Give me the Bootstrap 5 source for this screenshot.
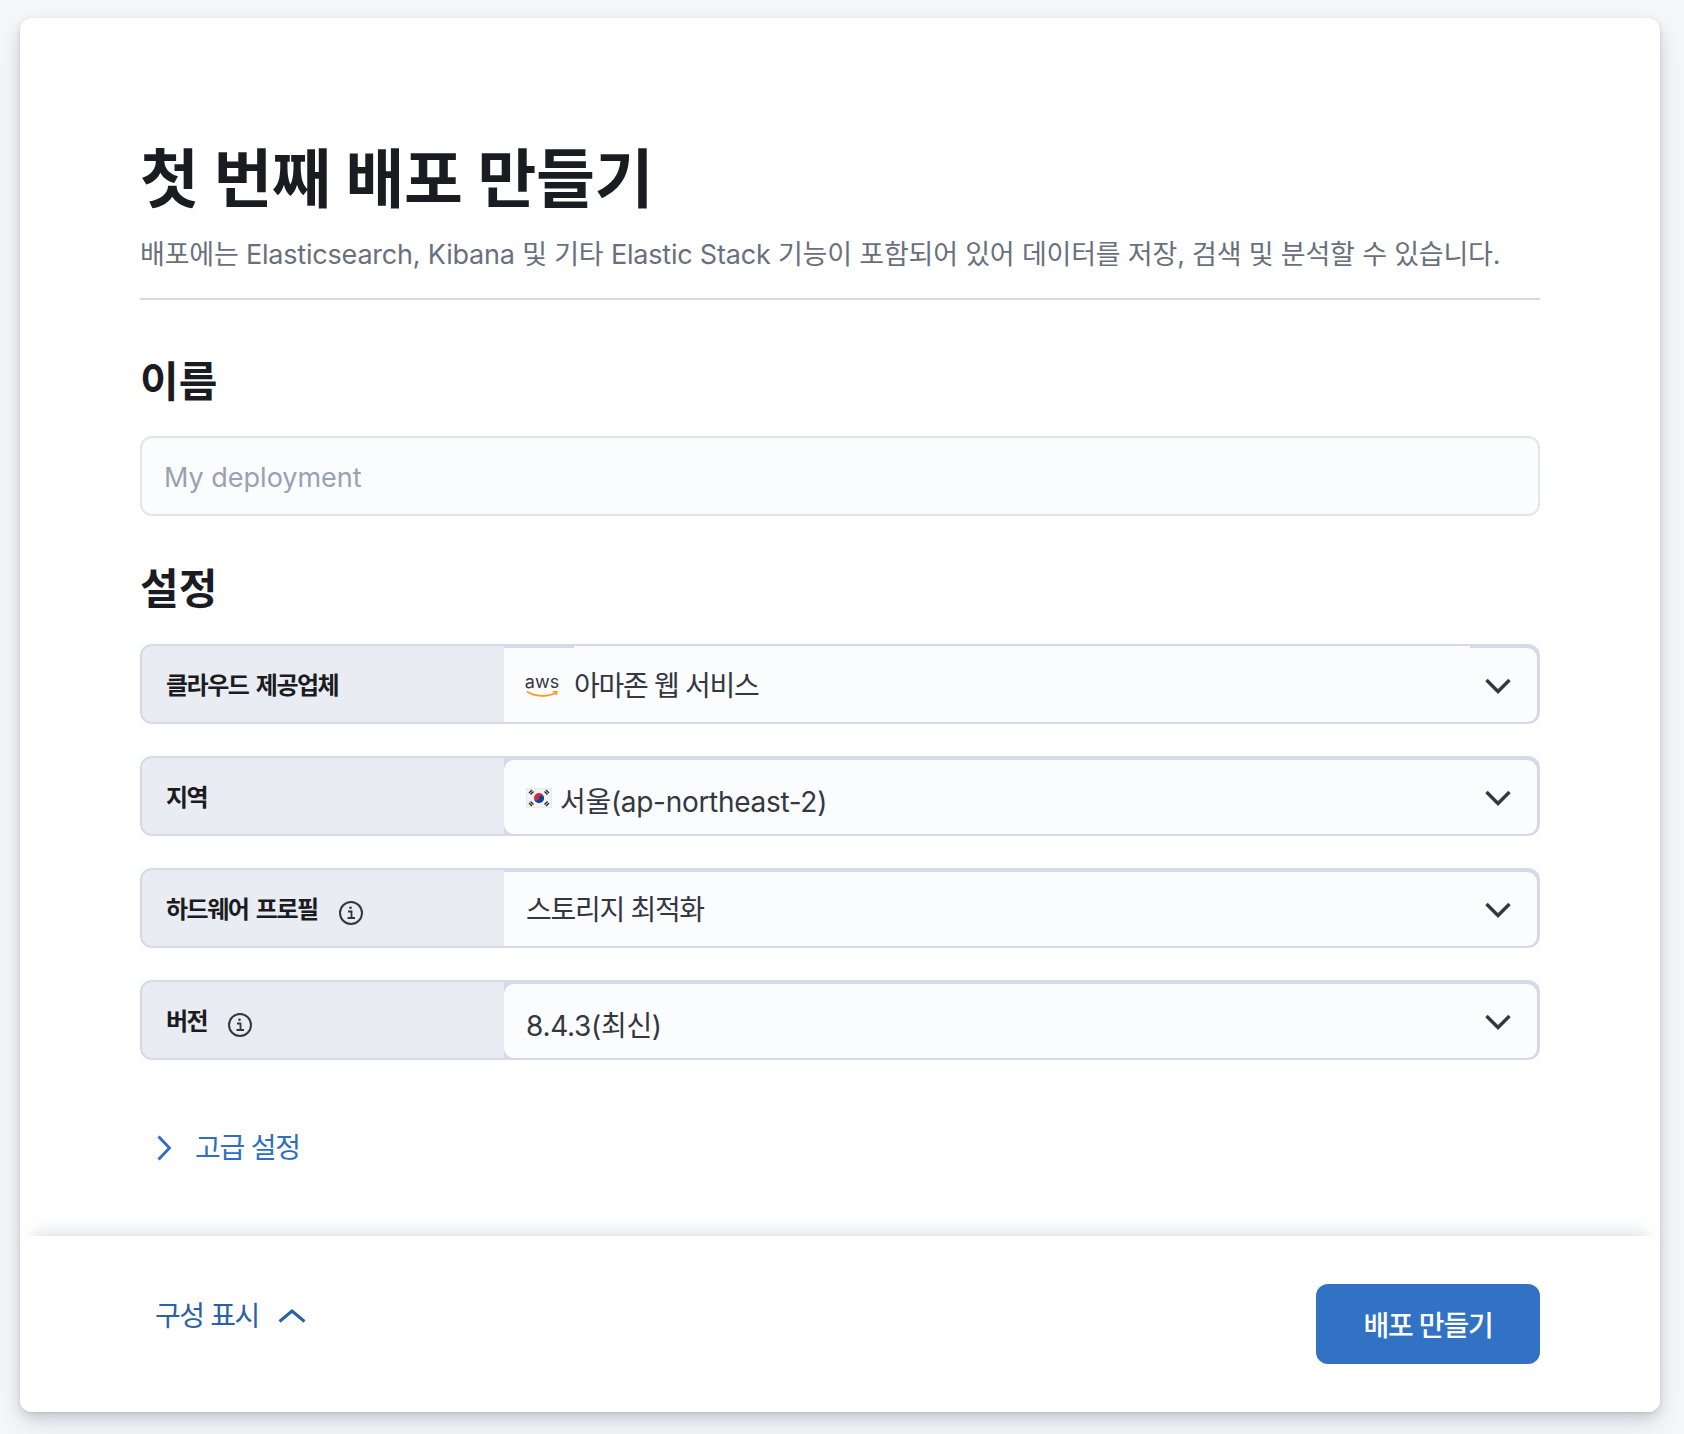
<!DOCTYPE html>
<html lang="ko">
<head>
    <meta charset="UTF-8">
    <meta name="viewport" content="width=device-width, initial-scale=1.0">
    <title>첫 번째 배포 만들기</title>

    <link rel="stylesheet" href="https://cdn.jsdelivr.net/npm/bootstrap@5.3.0/dist/css/bootstrap.min.css">
    <style>
        body {
            min-height: 100vh;
            padding: 18px 24px 22px 20px;
            background: #f5f7fa;
            font-family: Inter, "Noto Sans CJK KR", sans-serif;
            color: #343741;
        }
        .deploy-card {
            height: 1394px;
            border: 0;
            border-radius: 12px;
            box-shadow: 0 1px 3px rgba(30,35,60,.1), 0 5px 12px rgba(30,35,60,.13), 0 12px 28px rgba(60,66,90,.13);
        }
        .deploy-main { padding: 121px 120px 0; height: 1218px; }
        .deploy-title { font-size: 64px; line-height: 80px; font-weight: 700; color: #1a1c21; letter-spacing: -.3px; margin: 0; }
        .deploy-sub { font-size: 27px; line-height: 40px; letter-spacing: -.2px; color: #69707d; margin: 16px 0 0; }
        .deploy-rule { height: 2px; background: #d3dae6; margin-top: 23px; }
        .section-head { font-size: 42px; line-height: 56px; font-weight: 700; color: #1a1c21; margin: 0; }
        .name-head { margin-top: 54px; }
        .settings-head { margin-top: 45px; }
        .name-input, .name-input:focus {
            height: 80px;
            margin-top: 26px;
            padding: 2px 22px 0;
            font-size: 27px;
            background: #fbfcfd;
            border: 2px solid #e3e6ec;
            border-radius: 12px;
            box-shadow: none;
        }
        .name-input::placeholder { color: #98a2b3; opacity: 1; }
        .settings-rows { margin-top: 27px; row-gap: 32px; }
        .setting-row {
            height: 80px;
            background: #d5d9e8;
            border-radius: 12px;
            padding: 4px 3px 2px 2px;
        }
        .setting-label {
            width: 362px;
            margin-top: -2px;
            padding: 4px 0 0 24px;
            background: #e9ecf2;
            border-radius: 10px 0 0 10px;
            font-size: 24px;
            letter-spacing: -1.5px;
            word-spacing: 3px;
            font-weight: 600;
            color: #1a1c21;
        }
        .setting-value {
            background: #fbfcfd;
            padding: 2px 26px 0 22px;
            font-size: 28px;
            letter-spacing: -1.3px;
            color: #343741;
            border-radius: 10px;
        }
        .setting-value.square-left { border-radius: 0 10px 10px 0; }
        .setting-value.latin-value { letter-spacing: -.3px; }
        .first-row { position: relative; }
        .first-row::before {
            content: "";
            position: absolute;
            left: 434px;
            top: 2px;
            width: 896px;
            height: 2px;
            background: #fbfcfd;
        }
        .low-text { padding-top: 8px; }
        .chevron-box { width: 26px; height: 16px; flex: none; }
        .info-mark { width: 24px; height: 24px; margin-left: 21px; margin-top: 6px; flex: none; }
        .advanced-link {
            margin-top: 68px;
            height: 40px;
            padding-left: 17px;
            color: #2f6fbf;
            font-size: 28px;
            letter-spacing: -1.2px;
            text-decoration: none;
        }
        .deploy-foot {
            position: relative;
            height: 176px;
            padding: 48px 120px 0 135px;
            background: #fff;
            border-radius: 0 0 12px 12px;
            box-shadow: 0 -17px 16px -14px rgba(90,100,135,.22);
        }
        .config-link {
            height: 40px;
            margin-top: 12px;
            color: #2a62a8;
            font-size: 28px;
            letter-spacing: -1.4px;
            text-decoration: none;
        }
        .config-chevron { margin-left: 19px; }
        .create-btn {
            width: 224px;
            height: 80px;
            padding-top: 10px;
            background: #3272c4;
            border: 0;
            border-radius: 12px;
            font-size: 28px;
            letter-spacing: -1.200px;
            font-weight: 500;
            color: #fff;
        }
        .aws-box { width: 32px; margin-right: 16px; }
        .aws-word { font-size: 18px; line-height: 16px; letter-spacing: 0; color: #343741; }
    </style>
</head>
<body>

    <div class="card deploy-card">
        <div class="deploy-main">
            <h1 class="deploy-title">첫 번째 배포 만들기</h1>
            <p class="deploy-sub">배포에는 Elasticsearch, Kibana 및 기타 Elastic Stack 기능이 포함되어 있어 데이터를 저장, 검색 및 분석할 수 있습니다.</p>
            <div class="deploy-rule"></div>

            <h2 class="section-head name-head">이름</h2>
            <input type="text" class="form-control name-input" placeholder="My deployment">

            <h2 class="section-head settings-head">설정</h2>
            <div class="settings-rows d-flex flex-column">
                <div class="setting-row first-row d-flex">
                    <div class="setting-label d-flex align-items-center">클라우드 제공업체</div>
                    <div class="setting-value square-left flex-grow-1 d-flex align-items-center justify-content-between">
                        <span class="d-flex align-items-center">
                            <span class="aws-box d-flex flex-column align-items-center">
                                <span class="aws-word">aws</span>
                                <svg width="32" height="8" viewBox="0 0 33 8" fill="none"><path d="M1 1.500C9 7 23 7.500 31 2.500" stroke="#f79c1e" stroke-width="1.800"/><path d="M27.500 1.500L32 1.500L31 5" stroke="#f79c1e" stroke-width="1.400"/></svg>
                            </span>
                            아마존 웹 서비스
                        </span>
                        <svg class="chevron-box" viewBox="0 0 26 16" fill="none"><path d="M1.500 2L13 13.500L24.500 2" stroke="#343741" stroke-width="3.400"/></svg>
                    </div>
                </div>
                <div class="setting-row d-flex">
                    <div class="setting-label d-flex align-items-center">지역</div>
                    <div class="setting-value latin-value flex-grow-1 d-flex align-items-center justify-content-between">
                        <span class="d-flex align-items-center low-text">
                            <svg width="26" height="20" viewBox="0 0 26 20" class="me-2" style="margin-top:-8px">
                                <rect width="26" height="20" rx="1" fill="#f2f2f2" stroke="#d4d4d4" stroke-width=".6"/>
                                <circle cx="13" cy="10" r="5" fill="#cd2e3a"/>
                                <path d="M8 10a5 5 0 0 0 10 0a2.500 2.500 0 0 0-5 0a2.500 2.500 0 0 1-5 0z" fill="#0047a0"/>
                                <path d="M3 5l3-3M4.500 6.500l3-3M18.500 3.500l3 3M20 2l3 3M3 15l3 3M4.500 13.500l3 3M18.500 16.500l3-3M20 18l3-3" stroke="#222" stroke-width="1.300"/>
                            </svg>
                            서울(ap-northeast-2)
                        </span>
                        <svg class="chevron-box" viewBox="0 0 26 16" fill="none"><path d="M1.500 2L13 13.500L24.500 2" stroke="#343741" stroke-width="3.400"/></svg>
                    </div>
                </div>
                <div class="setting-row d-flex">
                    <div class="setting-label d-flex align-items-center">
                        하드웨어 프로필
                        <svg class="info-mark" viewBox="0 0 24 24" fill="none" stroke="#343741" stroke-width="2"><circle cx="12" cy="12" r="11"/><path d="M9 10.500h3.500V17M8.500 17h7.500" stroke-width="1.800"/><circle cx="11.500" cy="6.800" r="1.300" fill="#343741" stroke="none"/></svg>
                    </div>
                    <div class="setting-value square-left flex-grow-1 d-flex align-items-center justify-content-between">
                        <span>스토리지 최적화</span>
                        <svg class="chevron-box" viewBox="0 0 26 16" fill="none"><path d="M1.500 2L13 13.500L24.500 2" stroke="#343741" stroke-width="3.400"/></svg>
                    </div>
                </div>
                <div class="setting-row d-flex">
                    <div class="setting-label d-flex align-items-center">
                        버전
                        <svg class="info-mark" viewBox="0 0 24 24" fill="none" stroke="#343741" stroke-width="2"><circle cx="12" cy="12" r="11"/><path d="M9 10.500h3.500V17M8.500 17h7.500" stroke-width="1.800"/><circle cx="11.500" cy="6.800" r="1.300" fill="#343741" stroke="none"/></svg>
                    </div>
                    <div class="setting-value latin-value flex-grow-1 d-flex align-items-center justify-content-between">
                        <span class="low-text">8.4.3(최신)</span>
                        <svg class="chevron-box" viewBox="0 0 26 16" fill="none"><path d="M1.500 2L13 13.500L24.500 2" stroke="#343741" stroke-width="3.400"/></svg>
                    </div>
                </div>
            </div>

            <a href="#" class="advanced-link d-flex align-items-center">
                <svg width="14" height="26" viewBox="0 0 14 26" fill="none" class="me-4"><path d="M1.500 1.500L12.500 13L1.500 24.500" stroke="#2f6fbf" stroke-width="3"/></svg>
                고급 설정
            </a>
        </div>

        <div class="deploy-foot d-flex justify-content-between align-items-start">
            <a href="#" class="config-link d-flex align-items-center">
                구성 표시
                <svg class="config-chevron" width="28" height="14" viewBox="0 0 28 14" fill="none"><path d="M1.500 12.500L14 2L26.500 12.500" stroke="#2a62a8" stroke-width="3"/></svg>
            </a>
            <button type="button" class="btn create-btn">배포 만들기</button>
        </div>
    </div>

    <script src="https://cdn.jsdelivr.net/npm/bootstrap@5.3.0/dist/js/bootstrap.bundle.min.js"></script>
</body>
</html>
